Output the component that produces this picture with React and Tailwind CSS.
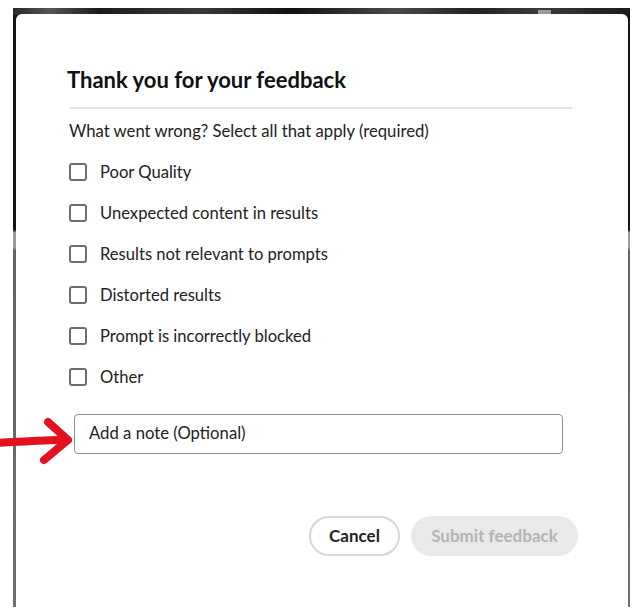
import React from 'react';

const reasons = [
  'Poor Quality',
  'Unexpected content in results',
  'Results not relevant to prompts',
  'Distorted results',
  'Prompt is incorrectly blocked',
  'Other',
];

// hand drawn red arrow pointing at the note field
const RedArrow = () => (
  <svg className="absolute left-0 top-[416px] z-10" width="76" height="52" viewBox="0 0 76 52" fill="none">
    <path d="M-4 27 C 18 26, 42 24, 64 24" stroke="#e3101d" strokeWidth="8" strokeLinecap="round" />
    <path d="M48 6 L68 24 L44 44" stroke="#e3101d" strokeWidth="8" strokeLinecap="round" strokeLinejoin="round" />
  </svg>
);

const App = () => {
  return (
    <div className="relative w-[634px] h-[612px] bg-white overflow-hidden" style={{ fontFamily: 'Lato, "Open Sans", sans-serif' }}>
      <RedArrow />
      <div className="relative ml-[13px] mt-[8px] w-[617px] h-[599px] pt-[6px] pl-[3px] pr-[2px] bg-[linear-gradient(180deg,#161616_0%,#161616_37%,#9c9c9c_37.5%,#9c9c9c_40%,#636363_40.5%,#6e6e6e_100%)]">
        <div className="absolute top-0 left-0 w-full h-[7px] bg-[linear-gradient(90deg,#2a2a2a_0%,#555_6%,#1b1b1b_14%,#3a3a3a_30%,#111_45%,#4a4a4a_62%,#222_75%,#3c3c3c_85%,#1a1a1a_100%)]" />
        <div className="absolute top-[2px] left-[525px] w-[13px] h-[6px] bg-[#9a9a9a]" />
        <div className="relative h-full bg-white rounded-t-[6px] text-[#222]">
          <h2 className="ml-[51px] pt-[52px] text-[22px] leading-[28px] font-bold text-[#111]">
            Thank you for your feedback
          </h2>
          <div className="ml-[54px] mt-[13px] w-[502px] h-[2px] bg-[#e3e3e3]" />
          <p className="ml-[53px] mt-[10px] text-[16.7px] leading-[24px]">
            What went wrong? Select all that apply (required)
          </p>
          <div className="ml-[53px] mt-[8px] flex flex-col">
            {reasons.map((r) => (
              <label key={r} className="h-[41px] flex items-center">
                <span className="w-[18px] h-[18px] border-2 border-[#6e6e6e] rounded-[3px] shrink-0" />
                <span className="ml-[13px] text-[16.6px] leading-[24px]">{r}</span>
              </label>
            ))}
          </div>
          <div className="ml-[58px] mt-[17px] w-[489px] h-[40px] border border-[#8f8f8f] rounded-[4px] flex items-center pl-[14px] text-[16.7px]">
            Add a note (Optional)
          </div>
          <div className="mt-[62px] mr-[50px] flex justify-end gap-[11px]">
            <button className="w-[91px] h-[40px] rounded-full border-2 border-[#d6d6d6] text-[17px] font-bold text-[#222]">
              Cancel
            </button>
            <button className="w-[167px] h-[40px] rounded-full bg-[#e9e9e9] text-[17px] font-bold text-[#b3b3b3]">
              Submit feedback
            </button>
          </div>
        </div>
      </div>
    </div>
  );
};

export default App;
